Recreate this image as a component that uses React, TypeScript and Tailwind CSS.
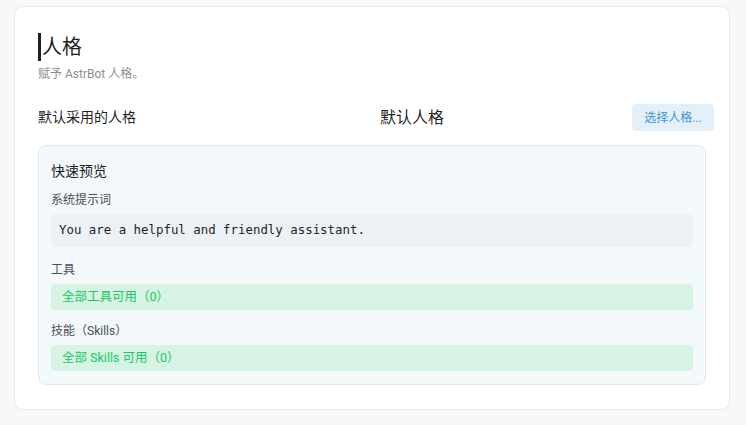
const tools: string[] = [];
const skills: string[] = [];

function SectionLabel({ children }: { children: React.ReactNode }) {
    return <div className="text-[12px] leading-[16px] text-[#4b4f55]">{children}</div>;
}

function GreenTag({ children }: { children: React.ReactNode }) {
    return (
        <div className="mt-[6px] flex h-[26px] items-center rounded-[4px] bg-[#d7f3e4] px-[11px] text-[12.5px] text-[#18c964]">
            {children}
        </div>
    );
}

export default function App() {
    return (
        <div
            className="min-h-[425px] bg-[#f7f8fa] pt-[6px] pl-[14px]"
            style={{ fontFamily: 'Roboto, "Noto Sans CJK SC", sans-serif' }}
        >
            <div className="h-[404px] w-[716px] rounded-[8px] border border-[#e6e8eb] bg-white px-[23px] pt-[26px]">
                {/* 标题 */}
                <div className="flex items-center">
                    <span className="mr-[1px] h-[28px] w-[3px] bg-[#1f1f1f]" />
                    <h1 className="text-[20px] leading-[28px] text-[#1f1f1f]">人格</h1>
                </div>
                <p className="mt-[5px] text-[12px] leading-[16px] text-[#8b8f94]">赋予 AstrBot 人格。</p>

                {/* 默认人格 */}
                <div className="mt-[22px] flex h-[27px] w-[676px] items-center">
                    <div className="w-[342px] text-[14px] text-[#1f1f1f]">默认采用的人格</div>
                    <div className="text-[16px] text-[#1f1f1f]">默认人格</div>
                    <button className="ml-auto flex h-[27px] w-[82px] items-center justify-center rounded-[4px] bg-[#e4f0f9] text-[12px] text-[#4794cd]">
                        选择人格...
                    </button>
                </div>

                {/* 快速预览 */}
                <div className="mt-[14px] h-[240px] w-[668px] rounded-[8px] border border-[#dde9f2] bg-[#f3f8fb] px-[12px] pt-[15px]">
                    <div className="text-[14px] leading-[20px] text-[#1f1f1f]">快速预览</div>
                    <div className="mt-[11px]">
                        <SectionLabel>系统提示词</SectionLabel>
                    </div>
                    <div
                        className="mt-[6px] flex h-[33px] items-center rounded-[5px] bg-[#ebf1f4] px-[8px] text-[12.4px] text-[#1f1f1f]"
                        style={{ fontFamily: '"DejaVu Sans Mono", monospace' }}
                    >
                        You are a helpful and friendly assistant.
                    </div>

                    <div className="mt-[15px]">
                        <SectionLabel>工具</SectionLabel>
                    </div>
                    <GreenTag>全部工具可用（{tools.length}）</GreenTag>

                    <div className="mt-[13px]">
                        <SectionLabel>技能（Skills）</SectionLabel>
                    </div>
                    <GreenTag>全部 Skills 可用（{skills.length}）</GreenTag>
                </div>
            </div>
        </div>
    );
}
